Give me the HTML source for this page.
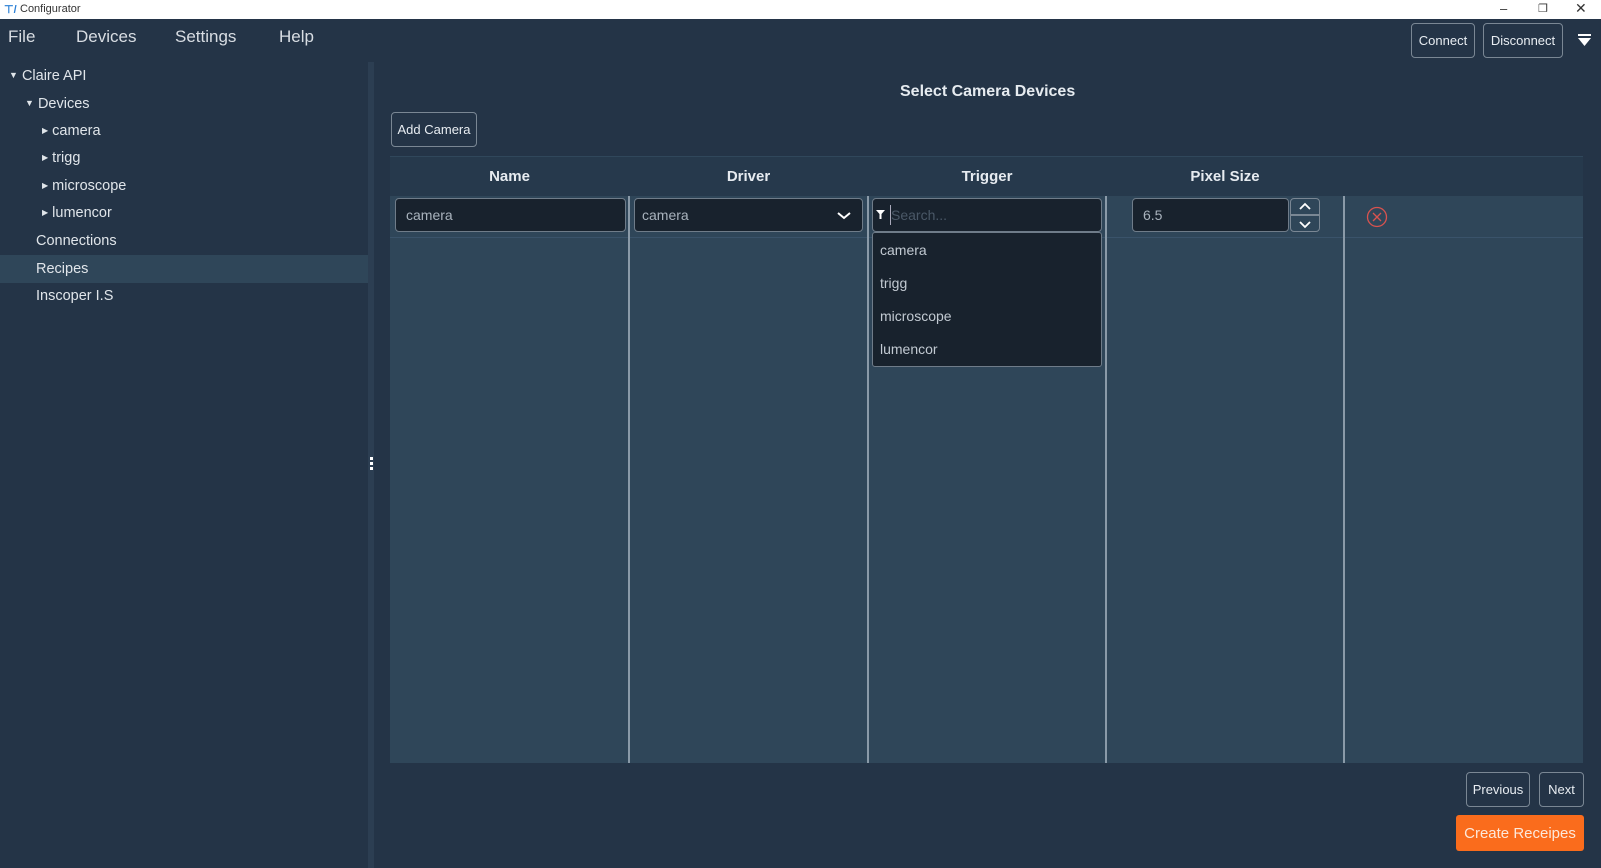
<!DOCTYPE html>
<html><head><meta charset="utf-8"><style>
*{box-sizing:border-box;margin:0;padding:0}
body{width:1601px;height:868px;background:#243447;font-family:"Liberation Sans",sans-serif;color:#e6ebf0;position:relative;overflow:hidden}
.a{position:absolute}
.title{left:0;top:0;width:1601px;height:19px;background:#fff;color:#333;font-size:11px}
.menu{font-size:17px;color:#d8dde3;top:27px}
.side{font-size:14.5px;color:#e0e5ea}
.side span{display:inline-block;vertical-align:2px}
.btn{border:1.5px solid #7a8794;border-radius:4px;background:#243447;color:#e8edf2;font-size:13px;display:flex;align-items:center;justify-content:center}
.inp{background:#18222d;border:1.5px solid #6f7c89;border-radius:4px;color:#a9b3bd;font-size:14px;padding-left:10px;display:flex;align-items:center}
.hd{font-size:15px;font-weight:bold;top:168px;text-align:center;color:#e6ebf0}
.vl{width:2px;background:#8a9aa8;top:196px;height:567px}
.dd{font-size:14px;color:#c2cad2;left:880px}
</style></head><body>
<div class="a title"><span class="a" style="left:4px;top:3px;color:#2a7fd6;font-weight:bold;font-size:11px">⊤/</span><span class="a" style="left:20px;top:3px">Configurator</span>
<span class="a" style="left:1500px;top:1px;font-size:13px">–</span><span class="a" style="left:1538px;top:2px;font-size:11px">❐</span><span class="a" style="left:1575px;top:0px;font-size:14px">✕</span></div>
<div class="a menu" style="left:8px">File</div><div class="a menu" style="left:76px">Devices</div><div class="a menu" style="left:175px">Settings</div><div class="a menu" style="left:279px">Help</div>
<div class="a btn" style="left:1411px;top:23px;width:64px;height:35px">Connect</div>
<div class="a btn" style="left:1483px;top:23px;width:80px;height:35px">Disconnect</div>
<svg class="a" style="left:1578px;top:34px" width="13" height="13"><rect x="0" y="0" width="13" height="2" fill="#fff"/><path d="M0 4H13L6.5 12Z" fill="#fff"/></svg>
<div class="a" style="left:0;top:255px;width:368px;height:28px;background:#2f4659"></div>
<div class="a" style="left:368px;top:62px;width:6px;height:806px;background:#2c3e52"></div>
<div class="a" style="left:370px;top:457px;width:3px;height:3px;background:#fff"></div>
<div class="a" style="left:370px;top:462px;width:3px;height:3px;background:#fff"></div>
<div class="a" style="left:370px;top:467px;width:3px;height:3px;background:#fff"></div>
<div class="a side" style="left:9px;top:68px"><span style="font-size:9px">▼</span> Claire API</div>
<div class="a side" style="left:25px;top:96px"><span style="font-size:9px">▼</span> Devices</div>
<div class="a side" style="left:42px;top:123px"><span style="font-size:8px">▶</span> camera</div>
<div class="a side" style="left:42px;top:150px"><span style="font-size:8px">▶</span> trigg</div>
<div class="a side" style="left:42px;top:178px"><span style="font-size:8px">▶</span> microscope</div>
<div class="a side" style="left:42px;top:205px"><span style="font-size:8px">▶</span> lumencor</div>
<div class="a side" style="left:36px;top:233px">Connections</div>
<div class="a side" style="left:36px;top:261px">Recipes</div>
<div class="a side" style="left:36px;top:288px">Inscoper I.S</div>
<div class="a" style="left:900px;top:83px;font-size:16px;font-weight:bold">Select Camera Devices</div>
<div class="a btn" style="left:391px;top:112px;width:86px;height:35px">Add Camera</div>
<div class="a" style="left:390px;top:156px;width:1193px;height:40px;background:#26394c;border-top:1px solid #30475b"></div>
<div class="a" style="left:390px;top:196px;width:1193px;height:567px;background:#2f4659"></div>
<div class="a" style="left:390px;top:237px;width:1193px;height:1px;background:#3a536a"></div>
<div class="a hd" style="left:390px;width:239px">Name</div>
<div class="a hd" style="left:629px;width:239px">Driver</div>
<div class="a hd" style="left:868px;width:238px">Trigger</div>
<div class="a hd" style="left:1106px;width:238px">Pixel Size</div>
<div class="a vl" style="left:628px"></div><div class="a vl" style="left:867px"></div><div class="a vl" style="left:1105px"></div><div class="a vl" style="left:1343px"></div>
<div class="a inp" style="left:395px;top:198px;width:231px;height:34px">camera</div>
<div class="a inp" style="left:634px;top:198px;width:229px;height:34px;padding-left:7px">camera</div>
<svg class="a" style="left:837px;top:211px" width="14" height="9"><path d="M1 2L7 7L13 2" stroke="#fff" stroke-width="2" fill="none"/></svg>
<div class="a inp" style="left:872px;top:198px;width:230px;height:34px;padding-left:18px;color:#4a5867">Search...</div>
<svg class="a" style="left:876px;top:210px" width="9" height="10"><path d="M0 0H9L5.5 4V9H3.5V4Z" fill="#fff"/></svg>
<div class="a" style="left:890px;top:205px;width:1px;height:20px;background:#aab"></div>
<div class="a" style="left:872px;top:232px;width:230px;height:135px;background:#18222d;border:1.5px solid #6f7c89;border-radius:3px"></div>
<div class="a dd" style="top:242px">camera</div>
<div class="a dd" style="top:275px">trigg</div>
<div class="a dd" style="top:308px">microscope</div>
<div class="a dd" style="top:341px">lumencor</div>
<div class="a inp" style="left:1132px;top:198px;width:157px;height:34px">6.5</div>
<div class="a" style="left:1290px;top:198px;width:30px;height:34px;border:1.5px solid #7a8794;border-radius:4px"></div>
<div class="a" style="left:1291px;top:214px;width:28px;height:1.5px;background:#7a8794"></div>
<svg class="a" style="left:1296px;top:201px" width="18" height="30"><path d="M4 8L9 3L14 8M4 21L9 26L14 21" stroke="#fff" stroke-width="1.8" fill="none"/></svg>
<svg class="a" style="left:1366px;top:206px" width="22" height="22"><circle cx="11" cy="11" r="9.5" stroke="#d9534f" stroke-width="1.3" fill="none"/><path d="M7 7L15 15M15 7L7 15" stroke="#d9534f" stroke-width="1.3"/></svg>
<div class="a btn" style="left:1466px;top:772px;width:64px;height:35px">Previous</div>
<div class="a btn" style="left:1539px;top:772px;width:45px;height:35px">Next</div>
<div class="a" style="left:1456px;top:815px;width:128px;height:36px;background:#fa6c1c;border-radius:3px;color:#fde8da;font-size:15px;display:flex;align-items:center;justify-content:center">Create Receipes</div>
</body></html>
